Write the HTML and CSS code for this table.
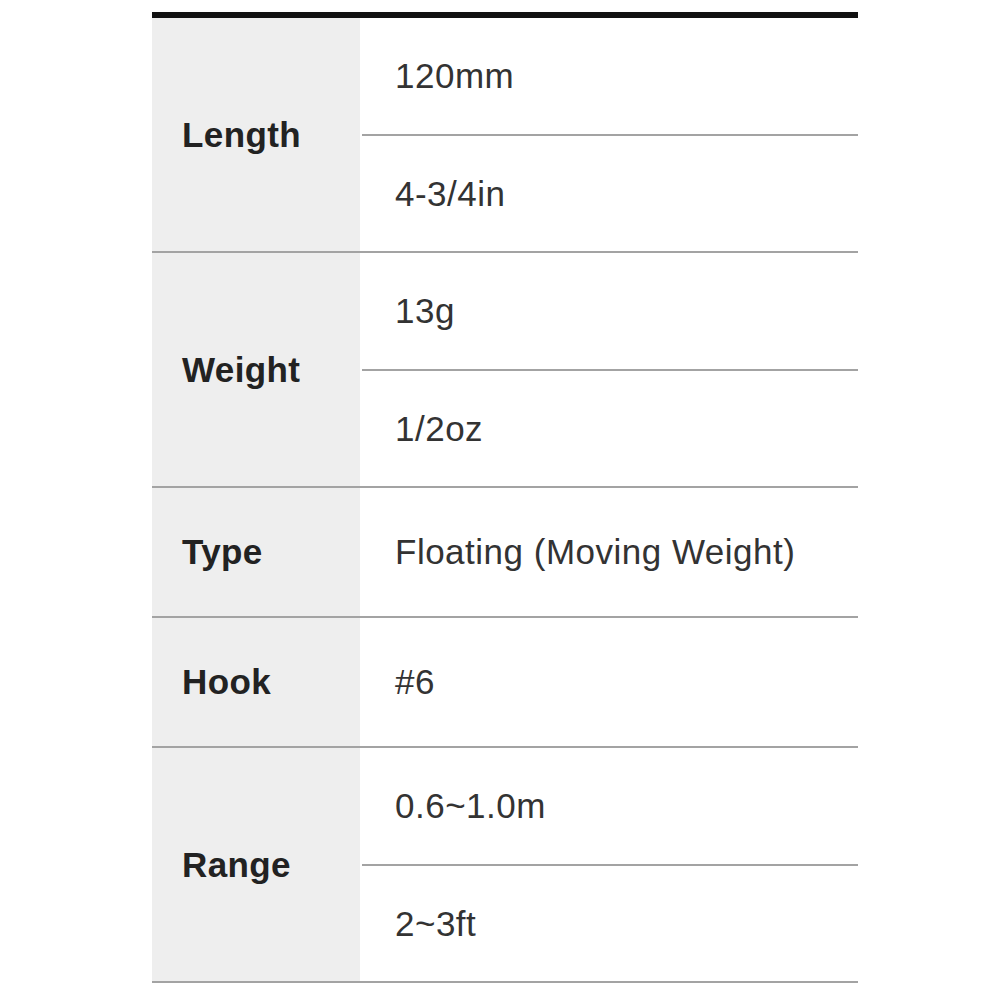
FILE: index.html
```html
<!DOCTYPE html>
<html>
<head>
<meta charset="utf-8">
<link rel="stylesheet" href="styles.css">
</head>
<body>
<div class="spec">
  <div class="group">
    <div class="head">Length</div>
    <div class="vals">
      <div class="val tall">120mm</div>
      <div class="val tall">4-3/4in</div>
    </div>
  </div>
  <div class="group">
    <div class="head">Weight</div>
    <div class="vals">
      <div class="val tall">13g</div>
      <div class="val tall">1/2oz</div>
    </div>
  </div>
  <div class="group">
    <div class="head">Type</div>
    <div class="vals">
      <div class="val short">Floating (Moving Weight)</div>
    </div>
  </div>
  <div class="group">
    <div class="head">Hook</div>
    <div class="vals">
      <div class="val short">#6</div>
    </div>
  </div>
  <div class="group">
    <div class="head">Range</div>
    <div class="vals">
      <div class="val tall">0.6~1.0m</div>
      <div class="val tall">2~3ft</div>
    </div>
  </div>
</div>
</body>
</html>
```

FILE: styles.css
```css
html, body {
  margin: 0;
  padding: 0;
  background: #ffffff;
}

.spec {
  width: 706px;
  margin: 12px 0 0 152px;
  border-top: 6px solid #111111;
  font-family: "Liberation Sans", Arial, sans-serif;
  font-size: 35px;
}

.group {
  display: flex;
  border-bottom: 2px solid #a3a3a3;
}

.head {
  width: 178px;
  flex: none;
  background: #eeeeee;
  padding-left: 30px;
  margin-right: 2px;
  display: flex;
  align-items: center;
  font-weight: bold;
  color: #222222;
  letter-spacing: 0.4px;
}

.vals {
  flex: 1;
  display: flex;
  flex-direction: column;
}

.val {
  display: flex;
  align-items: center;
  padding-left: 33px;
  color: #333333;
  letter-spacing: 0.5px;
}

.val.tall {
  height: 115px;
}

.val.tall:first-child {
  height: 116px;
  border-bottom: 2px solid #a3a3a3;
}

.val.short {
  height: 128px;
}
```
